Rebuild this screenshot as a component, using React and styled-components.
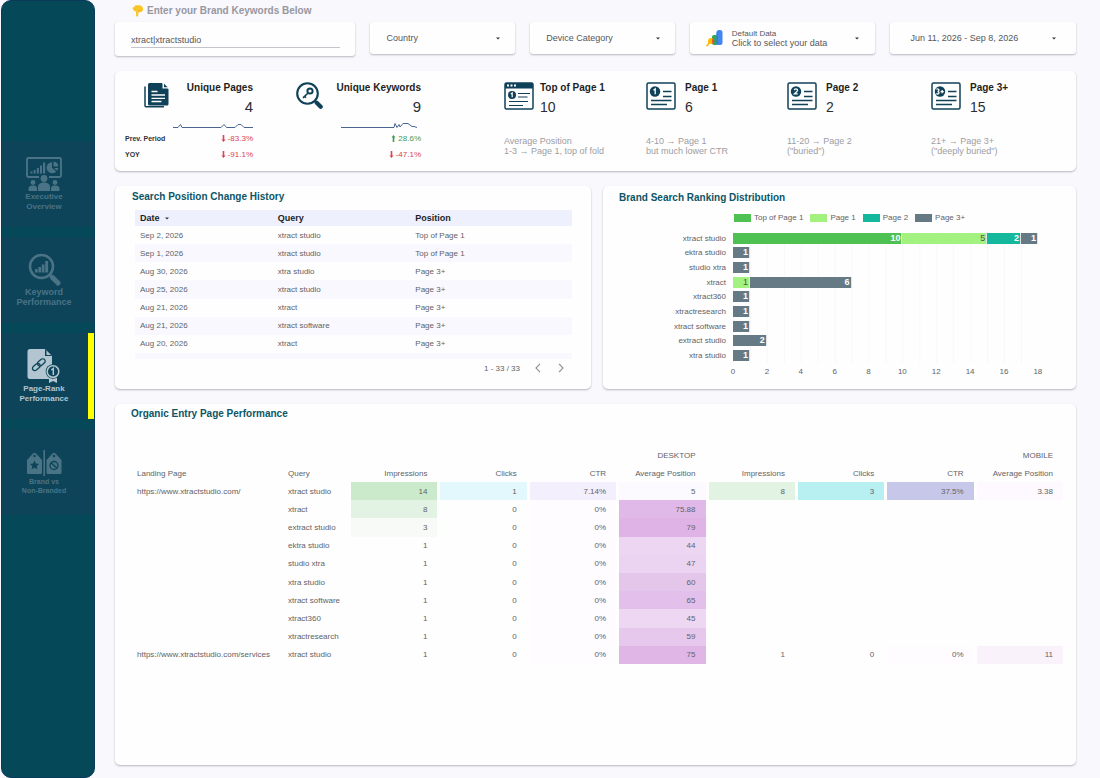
import React from "react";
import styled, { createGlobalStyle } from "styled-components";

const GlobalStyle = createGlobalStyle`
  *, *::before, *::after { box-sizing: border-box; }
  body {
    margin: 0;
    background: #f8f8fd;
    color: #5f6368;
    font-family: "Liberation Sans", Arial, sans-serif;
    font-size: 8px;
  }
  button, input, select { font: inherit; color: inherit; }
`;

const navy = "#0f4158";
const teal = "#0d5566";

/* ---------- Page frame ---------- */

const Page = styled.div`
  display: grid;
  grid-template-columns: 96px minmax(0, 1fr);
  min-height: 100vh;
`;

const Sidebar = styled.nav`
  display: flex;
  flex-direction: column;
  gap: 10px;
  margin: 0 1px;
  padding-top: 140px;
  border: 1px solid #0a3a5c;
  border-radius: 10px;
  background: #054858;
`;

const NavLink = styled.a`
  display: flex;
  flex-direction: column;
  align-items: center;
  justify-content: center;
  gap: 1px;
  height: 86px;
  padding-right: ${(p) => (p.$active ? 2 : 8)}px;
  border-right: ${(p) => (p.$active ? "6px solid #ffff00" : "0")};
  background: #0d4459;
  color: ${(p) => (p.$active ? "#b3c5d1" : "#4a7385")};
  font-size: ${(p) => p.$size}px;
  line-height: ${(p) => (p.$size > 8 ? 10 : p.$size + 2)}px;
  font-weight: bold;
  text-align: center;
  text-decoration: none;
  white-space: pre-line;
`;

const Main = styled.main`
  display: flex;
  flex-direction: column;
  gap: 15px;
  padding: 5px 24px 13px 19px;
`;

const Card = styled.section`
  border-radius: 5px;
  background: #fefefe;
  box-shadow: 0 1px 2px rgba(60, 60, 80, 0.35);
`;

const CardTitle = styled.h2`
  margin: 0;
  color: ${teal};
  font-size: 10px;
  line-height: 12px;
`;

/* ---------- Filters ---------- */

const FilterArea = styled.div`
  display: flex;
  flex-direction: column;
  gap: 5px;
`;

const FilterHint = styled.label`
  display: flex;
  align-items: center;
  gap: 3px;
  padding-left: 17px;
  color: #97979f;
  font-size: 10px;
  line-height: 12px;
  font-weight: bold;
`;

const FilterRow = styled.div`
  display: grid;
  grid-template-columns: 241fr 145fr 145fr 186fr 186fr;
  align-items: start;
  gap: 15px;
`;

const FilterCard = styled(Card)`
  display: grid;
  height: ${(p) => (p.$tall ? 34 : 32)}px;
  padding: ${(p) => (p.$tall ? "10px 15px 8px 16px" : "0")};
  border-radius: 3px;
  color: #55565c;
  font-size: 9px;
`;

const KeywordInput = styled.input`
  min-width: 0;
  padding: 0;
  border: 0;
  border-bottom: 1px solid #c4c4ca;
  outline: 0;
  background: transparent;
`;

const FilterSelect = styled.select`
  grid-area: 1 / 1;
  min-width: 0;
  padding: 0 16px;
  border: 0;
  appearance: none;
  background: transparent;
`;

const SelectArrow = styled.span`
  grid-area: 1 / 1;
  align-self: center;
  justify-self: end;
  display: flex;
  margin-right: 15px;
  pointer-events: none;
`;

const FilterButton = styled.button`
  display: flex;
  align-items: center;
  gap: 9px;
  min-width: 0;
  padding: 0 ${(p) => p.$side}px;
  border: 0;
  background: transparent;
  text-align: left;
  line-height: 10px;
`;

const FilterText = styled.span`
  flex: 1;
  small {
    display: block;
    font-size: 8px;
    line-height: 9px;
  }
`;

/* ---------- Key figures ---------- */

const KpiCard = styled(Card)`
  display: grid;
  grid-template-columns: 179fr 209fr 142fr 141fr 144fr 145fr;
  min-height: 100px;
  padding: 11px 0 0 1px;
`;

const Trend = styled.div`
  display: flex;
  flex-direction: column;
  align-items: flex-end;
  width: ${(p) => (p.$labelled ? 137 : 126)}px;
`;

const TrendHead = styled.div`
  display: flex;
  justify-content: space-between;
  width: ${(p) => p.$width}px;
  text-align: right;
`;

const KpiName = styled.h3`
  margin: 0;
  color: #1e1f24;
  font-size: 10px;
  line-height: 12px;
`;

const KpiValue = styled.div`
  color: #2c2d33;
  font-size: ${(p) => (p.$large ? 15 : 14)}px;
  line-height: 16px;
  padding-top: 5px;
`;

const TrendRow = styled.div`
  display: flex;
  justify-content: space-between;
  align-items: center;
  width: 128px;
  height: 16px;
`;

const TrendLabel = styled.span`
  color: #303137;
  font-size: 7px;
  font-weight: bold;
`;

const Delta = styled.span`
  display: flex;
  align-items: center;
  gap: 2px;
  margin-left: auto;
  color: ${(p) => (p.$up ? "#3f9a52" : "#dc4253")};
`;

const SparkBox = styled.div`
  display: flex;
  padding: 4px 0 1px;
`;

const Rank = styled.div`
  display: flex;
  flex-direction: column;
  gap: 21px;
`;

const RankHead = styled.div`
  display: flex;
  gap: ${(p) => p.$gap}px;
`;

const RankNote = styled.p`
  margin: 0;
  color: #9d9da4;
  font-size: 9px;
  line-height: 10px;
  white-space: pre-line;
`;

/* ---------- Middle panels ---------- */

const PanelRow = styled.div`
  display: grid;
  grid-template-columns: minmax(0, 476fr) minmax(0, 473fr);
  gap: 12px;
`;

const Panel = styled(Card)`
  min-height: 203px;
  padding: 5px 19px 0 17px;
`;

const HistoryTable = styled.table`
  width: calc(100% - 3px);
  height: 149px;
  margin: 7px 0 0 3px;
  border-spacing: 0;
  table-layout: fixed;

  th {
    height: 16px;
    padding: 0 5px;
    background: #eef0fe;
    color: #1e1f24;
    font-size: 9px;
    text-align: left;
  }
  th:last-child { width: 37%; }
  td { height: 18px; padding: 0 5px; }
  tbody tr:nth-child(even) td { background: #f8f8fe; }
  tbody tr:last-child td { height: 6px; }
`;

const SortButton = styled.button`
  display: flex;
  align-items: center;
  gap: 5px;
  padding: 0;
  border: 0;
  background: transparent;
`;

const Pager = styled.div`
  display: flex;
  align-items: center;
  justify-content: flex-end;
  gap: 13px;
  height: 18px;
  padding-right: 6px;
`;

const PagerButton = styled.button`
  display: flex;
  width: 10px;
  padding: 0;
  border: 0;
  background: transparent;
`;

const ChartPanel = styled(Panel)`
  padding: 6px 38px 0 16px;
`;

const Legend = styled.ul`
  display: flex;
  gap: 7px;
  margin: 9px 0 0;
  padding: 0 0 0 115px;
  list-style: none;
  line-height: 10px;
`;

const LegendItem = styled.li`
  display: flex;
  align-items: center;
  gap: 3px;
  white-space: nowrap;
  &::before {
    content: "";
    width: 17px;
    height: 8px;
    background: ${(p) => p.$color};
  }
`;

const Plot = styled.div`
  display: grid;
  grid-template-columns: 107px minmax(0, 1fr);
  column-gap: 7px;
  margin-top: 8px;
`;

const Categories = styled.div`
  display: grid;
  grid-auto-rows: 1fr;
  align-items: center;
  height: 132px;
  text-align: right;
`;

const Bars = styled.div`
  display: grid;
  grid-auto-rows: 1fr;
  align-items: center;
  height: 132px;
  background: linear-gradient(to right, #f8f8fa 1px, transparent 1px) 0 0 / calc(100% / 18) 100%;
`;

const Bar = styled.div`
  display: flex;
  height: 11px;
`;

const Segment = styled.span`
  padding-right: 1px;
  border-right: 1px solid #dfe5e6;
  background: ${(p) => p.$color};
  color: ${(p) => (p.$dark ? "#4c5a45" : "#ffffff")};
  font-size: 9px;
  font-weight: ${(p) => (p.$dark ? "normal" : "bold")};
  line-height: 11px;
  text-align: right;
`;

const Axis = styled.div`
  grid-column: 2;
  display: flex;
  justify-content: space-between;
  padding-top: 4px;
  line-height: 10px;
`;

const Tick = styled.span`
  display: flex;
  justify-content: center;
  width: 0;
`;

/* ---------- Landing page table ---------- */

const EntryCard = styled(Card)`
  flex: 1;
  padding: 4px 10px 20px 16px;
`;

const EntryTable = styled.table`
  width: 100%;
  height: 218px;
  margin-top: 26px;
  border-spacing: 3px 0;
  table-layout: fixed;

  th, td {
    height: 18px;
    padding: 0 10px 0 0;
    font-weight: normal;
    text-align: right;
    white-space: nowrap;
  }
  th:nth-child(-n + 2), td:nth-child(-n + 2) {
    padding: 0 0 0 3px;
    text-align: left;
  }
  thead th[colspan] {
    padding: 0 10px 0 0;
    text-align: right;
  }
`;

const LandingCol = styled.col` width: 148px; `;
const QueryCol = styled.col` width: 63px; `;

const Cell = styled.td`
  background: ${(p) => p.$tint || "transparent"};
`;

/* ---------- Icons ---------- */

const Arrow = () => (
  <svg width="4" height="3" viewBox="0 0 4 3" aria-hidden="true">
    <path d="M0 .4h4L2 2.6z" fill="#33343a" />
  </svg>
);

const HandIcon = () => (
  <svg width="12" height="12" viewBox="0 0 12 12" aria-hidden="true">
    <path
      d="M3 .6C4.500 .1 7 .1 8.600.6c1.400.5 2.400 1.900 2.500 3.400.1 1.500-.8 2.600-2 2.600-.5.700-1.300.9-2 .6l-.7.1-.1 3.300c0 .8-.5 1.200-1.100 1.200s-1.100-.4-1.100-1.200L4 6.600C2.500 6.200 1 4.800.600 3.700.3 2.700 1.200 2.100 2 2.500z"
      fill="#fbc628"
    />
    <path d="M6.600 7.200V4.800M9 6.600V4.600M2 2.600l2 1.700" stroke="#e8a722" strokeWidth=".6" fill="none" />
  </svg>
);

const DataIcon = () => (
  <svg width="17" height="17" viewBox="0 0 17 17" aria-hidden="true">
    <rect x="10.500" y="0" width="6" height="15" rx="2.500" fill="#4285f4" />
    <rect x="6" y="5" width="5.500" height="10" rx="2" fill="#2fa556" />
    <path d="M10.500 3v12h1.500V1.500z" fill="#3a78e0" />
    <circle cx="5" cy="11" r="3" fill="#fbbc04" />
    <path d="M6.200 8.600a3 3 0 0 1 1.500 4.200L6.200 14z" fill="#e8453c" />
    <path d="M3.600 12.500L1 15.700" stroke="#fbbc04" strokeWidth="1.600" strokeLinecap="round" />
  </svg>
);

const OverviewIcon = () => (
  <svg width="36" height="34" viewBox="0 0 36 34" fill="currentColor" aria-hidden="true">
    <path
      d="M13 20H2.500A1.500 1.500 0 0 1 1 18.500V2.500A1.500 1.500 0 0 1 2.500 1h31A1.500 1.500 0 0 1 35 2.500V18.500a1.500 1.500 0 0 1-1.500 1.500H23"
      fill="none"
      stroke="currentColor"
      strokeWidth="1.900"
    />
    <path d="M4.500 14.500h2V16.500h-2zM7.700 13h2v3.500h-2zM10.900 11h2v5.500h-2zM14 8.500h2v8h-2zM17 5.500h2.200v11H17z" />
    <path d="M26 5.200V10.800l4.200 3.600A5.500 5.500 0 1 1 26 5.200z" />
    <path d="M27.500 4.500a5.200 5.200 0 0 1 4.800 5h-4.800zM28 11h4.300a5 5 0 0 1-1.300 2.700z" />
    <circle cx="18" cy="21.500" r="3.400" />
    <path d="M12 34v-4c0-3 2.500-4.500 6-4.500s6 1.500 6 4.500v4z" />
    <circle cx="7" cy="25.500" r="2.400" />
    <circle cx="29" cy="25.500" r="2.400" />
    <path d="M2.500 34v-2.500c0-2 1.500-3 4.500-3s4 1 4 3V34zM25 34v-2.500c0-2 1-3 4-3s4.500 1 4.500 3V34z" />
  </svg>
);

const KeywordIcon = () => (
  <svg width="33" height="33" viewBox="0 0 33 33" fill="currentColor" aria-hidden="true">
    <circle cx="13.500" cy="13.500" r="11.500" fill="none" stroke="currentColor" strokeWidth="2.600" />
    <path d="M7 16h2.700v3.500H7zM10.400 14h2.700v5.500h-2.700zM13.800 11.500h2.700v8h-2.700zM17.200 8h2.900v11.500h-2.900z" />
    <path d="M21 21l3 3" stroke="currentColor" strokeWidth="2.500" />
    <path d="M24.500 24.500l5.500 5.500" stroke="currentColor" strokeWidth="5" strokeLinecap="round" />
  </svg>
);

const PageRankIcon = () => (
  <svg width="34" height="34" viewBox="0 0 34 34" aria-hidden="true">
    <path d="M3 0h15l7 7v23H3a2.500 2.500 0 0 1-2.500-2.500v-25A2.500 2.500 0 0 1 3 0z" fill="currentColor" />
    <path d="M18 0v7h7z" fill="#0d4459" />
    <path d="M19.500 1.500L24 6h-4.500z" fill="currentColor" />
    <g fill="none" stroke="#0d4459" strokeWidth="1.300">
      <rect x="-4.300" y="-2.400" width="8.600" height="4.800" rx="2.400" transform="translate(14.300 13.400) rotate(-40)" />
      <rect x="-4.300" y="-2.400" width="8.600" height="4.800" rx="2.400" transform="translate(9.300 18) rotate(-40)" />
    </g>
    <path d="M22 27h8v7l-4-2-4 2z" fill="currentColor" />
    <circle cx="26" cy="22.500" r="7.300" fill="#0d4459" />
    <circle cx="26" cy="22.500" r="5.800" fill="#0d4459" stroke="currentColor" strokeWidth="1.500" />
    <path d="M24.300 21l2-1.500v6.500" fill="none" stroke="currentColor" strokeWidth="1.500" />
  </svg>
);

const BrandIcon = () => (
  <svg width="36" height="26" viewBox="0 0 36 26" aria-hidden="true">
    <path d="M1 10l6-6.500a2.200 2.200 0 0 1 3 0L16 10v12.500a1.500 1.500 0 0 1-1.500 1.500h-12A1.500 1.500 0 0 1 1 22.500z" fill="currentColor" />
    <path d="M20.500 10l6-6.500a2.200 2.200 0 0 1 3 0L35.500 10v12.500a1.500 1.500 0 0 1-1.500 1.500h-12a1.500 1.500 0 0 1-1.500-1.500z" fill="currentColor" />
    <path d="M18.200 0v26" stroke="currentColor" strokeWidth="1.600" />
    <circle cx="8.500" cy="6" r="1.200" fill="#0d4459" />
    <circle cx="28" cy="6" r="1.200" fill="#0d4459" />
    <path d="M8.500 10.500l1.400 3 3.200.4-2.400 2.200.7 3.200-2.900-1.600-2.900 1.600.7-3.200-2.400-2.200 3.200-.4z" fill="#0d4459" />
    <circle cx="28" cy="15.500" r="4" fill="none" stroke="#0d4459" strokeWidth="1.300" />
    <path d="M25.200 12.700l5.600 5.600" stroke="#0d4459" strokeWidth="1.300" />
  </svg>
);

const PagesIcon = () => (
  <svg width="25" height="26" viewBox="0 0 25 26" aria-hidden="true">
    <path d="M1 4.500v19.300a1 1 0 0 0 1 1h18" fill="none" stroke={navy} strokeWidth="1.500" />
    <path d="M5.500 1h12.500l6.500 6v15a1.500 1.500 0 0 1-1.500 1.500H5.500A1.500 1.500 0 0 1 4 22V2.500A1.500 1.500 0 0 1 5.500 1z" fill={navy} />
    <path d="M18.500 0v6.500H25z" fill="#fefefe" />
    <path d="M20 1.800L23.700 5.300H20z" fill={navy} />
    <path d="M7.500 9.500h6M7.500 13h13.500M7.500 16.300h13.500M7.500 19.500h10" stroke="#fefefe" strokeWidth="1.300" />
  </svg>
);

const KeySearchIcon = () => (
  <svg width="27" height="27" viewBox="0 0 27 27" aria-hidden="true">
    <circle cx="11.500" cy="11.500" r="10.300" fill="none" stroke={navy} strokeWidth="2.100" />
    <path d="M18.500 18.500l2 2" stroke={navy} strokeWidth="2" />
    <path d="M20.700 20.700l4 4" stroke={navy} strokeWidth="4.200" strokeLinecap="round" />
    <circle cx="14" cy="9" r="2.600" fill="none" stroke={navy} strokeWidth="2" />
    <path d="M12.100 11L7 15.800M8.500 14.300l1.500 1.500" fill="none" stroke={navy} strokeWidth="1.600" />
  </svg>
);

const badgeMarks = {
  1: "M-1.500 -1.300L.2 -2.600V2.800",
  2: "M-1.700 -1.300C-1.500 -3 1.600 -3 1.500 -1.100C1.400 .2 -.8 1.300 -1.700 2.400H1.800",
  3: "M-3.600 -2.200C-2 -3.200 -.6 -2 -1.200 -.8C-1.500 -.2 -2 0 -2.500 0C-1.200 0 -.6 1 -1.200 1.900C-1.800 2.700 -3 2.500 -3.700 2M.6 .2H3.800M2.200 -1.400V1.800",
};

const ListIcon = ({ mark }) => (
  <svg width="30" height="28" viewBox="0 0 30 28" fill="none" aria-hidden="true">
    <rect x="1" y="1" width="28" height="26" rx="1.500" stroke={navy} strokeWidth="1.500" />
    <circle cx="9" cy="9.500" r="5.200" fill={navy} />
    <path d={badgeMarks[mark]} transform="translate(9 9.500)" stroke="#fefefe" strokeWidth="1.300" />
    <path d="M17 9.500h8.500M17 14.500h8.500M5 18.500h20.500M5 22.500h16" stroke={navy} strokeWidth="1.300" />
  </svg>
);

const BrowserIcon = () => (
  <svg width="30" height="28" viewBox="0 0 30 28" fill="none" aria-hidden="true">
    <rect x="1" y="1" width="28" height="26" rx="1.500" stroke={navy} strokeWidth="1.500" />
    <path d="M1 1h28v5.500H1z" fill={navy} />
    <path d="M3 3.500h2M6.500 3.500h2M10 3.500h2" stroke="#fefefe" strokeWidth="1.800" />
    <circle cx="8" cy="13" r="4" fill={navy} />
    <path d="M-1.200 -1L.2 -2V2.200" transform="translate(8 13)" stroke="#fefefe" strokeWidth="1.200" />
    <path d="M14 11.500h12M14 15h9.500M5 19.500h19M5 23.500h14" stroke={navy} strokeWidth="1.200" />
  </svg>
);

const Chevron = ({ d }) => (
  <svg width="10" height="10" viewBox="0 0 10 10" aria-hidden="true">
    <path d={d} fill="none" stroke="#8e8f96" strokeWidth="1.100" />
  </svg>
);

const DeltaArrow = ({ up }) => (
  <svg width="5" height="7" viewBox="0 0 5 7" aria-hidden="true">
    <path
      d={up ? "M2.500 0L4.500 2.500H3.300V7H1.700V2.500H.5z" : "M2.500 7L4.500 4.500H3.300V0H1.700V4.500H.5z"}
      fill="currentColor"
    />
  </svg>
);

const Spark = ({ d }) => (
  <svg width="80" height="10" viewBox="0 0 80 10" aria-hidden="true">
    <path d={d} fill="none" stroke="#4b6592" strokeWidth="1" />
  </svg>
);

/* ---------- Data ---------- */

const navItems = [
  { label: "Executive\nOverview", icon: OverviewIcon, size: 8 },
  { label: "Keyword\nPerformance", icon: KeywordIcon, size: 9 },
  { label: "Page-Rank\nPerformance", icon: PageRankIcon, size: 8, active: true },
  { label: "Brand vs\nNon-Branded", icon: BrandIcon, size: 7 },
];

const ranks = [
  { name: "Top of Page 1", value: 10, note: "Average Position\n1-3 → Page 1, top of fold", gap: 6 },
  { name: "Page 1", value: 6, note: "4-10 → Page 1\nbut much lower CTR", gap: 9, mark: 1 },
  { name: "Page 2", value: 2, note: "11-20 → Page 2\n(\"buried\")", gap: 9, mark: 2 },
  { name: "Page 3+", value: 15, note: "21+ → Page 3+\n(\"deeply buried\")", gap: 9, mark: 3 },
];

const history = [
  ["Sep 2, 2026", "xtract studio", "Top of Page 1"],
  ["Sep 1, 2026", "xtract studio", "Top of Page 1"],
  ["Aug 30, 2026", "xtra studio", "Page 3+"],
  ["Aug 25, 2026", "xtract studio", "Page 3+"],
  ["Aug 21, 2026", "xtract", "Page 3+"],
  ["Aug 21, 2026", "xtract software", "Page 3+"],
  ["Aug 20, 2026", "xtract", "Page 3+"],
];

const series = [
  { name: "Top of Page 1", color: "#4fc052" },
  { name: "Page 1", color: "#a3f17f", dark: true },
  { name: "Page 2", color: "#14b89c" },
  { name: "Page 3+", color: "#667a86" },
];

const distribution = [
  ["xtract studio", [10, 5, 2, 1]],
  ["ektra studio", [0, 0, 0, 1]],
  ["studio xtra", [0, 0, 0, 1]],
  ["xtract", [0, 1, 0, 6]],
  ["xtract360", [0, 0, 0, 1]],
  ["xtractresearch", [0, 0, 0, 1]],
  ["xtract software", [0, 0, 0, 1]],
  ["extract studio", [0, 0, 0, 2]],
  ["xtra studio", [0, 0, 0, 1]],
];

const axisMax = 18;
const ticks = [0, 2, 4, 6, 8, 10, 12, 14, 16, 18];

const metrics = ["Impressions", "Clicks", "CTR", "Average Position"];
const none = ["", "", "", ""];

const entries = [
  ["https://www.xtractstudio.com/", "xtract studio", "14", "1", "7.14%", "5", "8", "3", "37.5%", "3.38"],
  ["", "xtract", "8", "0", "0%", "75.88", ...none],
  ["", "extract studio", "3", "0", "0%", "79", ...none],
  ["", "ektra studio", "1", "0", "0%", "44", ...none],
  ["", "studio xtra", "1", "0", "0%", "47", ...none],
  ["", "xtra studio", "1", "0", "0%", "60", ...none],
  ["", "xtract software", "1", "0", "0%", "65", ...none],
  ["", "xtract360", "1", "0", "0%", "45", ...none],
  ["", "xtractresearch", "1", "0", "0%", "59", ...none],
  ["https://www.xtractstudio.com/services", "xtract studio", "1", "0", "0%", "75", "1", "0", "0%", "11"],
];

/* Heat-map tint of each value, by metric. */
const tints = [
  { 14: "#cbeacb", 8: "#e2f3e3", 3: "#f7faf6" },
  { 1: "#e3f8fd", 3: "#b8f0f2" },
  { "7.14%": "#f3effc", "37.5%": "#c7c7e9", "0%": "#fefcff" },
  {
    5: "#fdfaff", "3.38": "#fdf9fe", 11: "#f9f2fb", "75.88": "#e0b9e8", 79: "#dfb3e6", 44: "#ecd6f2",
    47: "#ebd4f1", 60: "#e4c6eb", 65: "#e3c0eb", 45: "#edd7f3", 59: "#e6c8ed", 75: "#e0b6e7",
  },
];

const tintOf = (value, column) => (column < 2 ? undefined : tints[(column - 2) % 4][value]);

/* ---------- Sections ---------- */

const SelectFilter = ({ label }) => (
  <FilterCard as="div">
    <FilterSelect aria-label={label} defaultValue={label}>
      <option>{label}</option>
    </FilterSelect>
    <SelectArrow><Arrow /></SelectArrow>
  </FilterCard>
);

const Filters = () => (
  <FilterArea>
    <FilterHint htmlFor="keywords"><HandIcon />Enter your Brand Keywords Below</FilterHint>
    <FilterRow>
      <FilterCard as="div" $tall>
        <KeywordInput id="keywords" defaultValue="xtract|xtractstudio" />
      </FilterCard>
      <SelectFilter label="Country" />
      <SelectFilter label="Device Category" />
      <FilterCard as="div">
        <FilterButton $side={16}>
          <DataIcon />
          <FilterText><small>Default Data</small>Click to select your data</FilterText>
          <Arrow />
        </FilterButton>
      </FilterCard>
      <FilterCard as="div">
        <FilterButton $side={20}>
          <FilterText>Jun 11, 2026 - Sep 8, 2026</FilterText>
          <Arrow />
        </FilterButton>
      </FilterCard>
    </FilterRow>
  </FilterArea>
);

const TrendKpi = ({ icon: Icon, name, value, labels, deltas, headWidth, spark }) => (
  <Trend $labelled={Boolean(labels)}>
    <TrendHead $width={headWidth}>
      <Icon />
      <div>
        <KpiName>{name}</KpiName>
        <KpiValue $large>{value}</KpiValue>
      </div>
    </TrendHead>
    <SparkBox><Spark d={spark} /></SparkBox>
    {deltas.map(([text, up], i) => (
      <TrendRow key={text}>
        {labels && <TrendLabel>{labels[i]}</TrendLabel>}
        <Delta $up={up}><DeltaArrow up={up} />{text}</Delta>
      </TrendRow>
    ))}
  </Trend>
);

const KeyFigures = () => (
  <KpiCard>
    <TrendKpi
      icon={PagesIcon}
      name="Unique Pages"
      value={4}
      labels={["Prev. Period", "YOY"]}
      deltas={[["-83.3%", false], ["-91.1%", false]]}
      headWidth={109}
      spark="M0 8.500H5L7.500 5.500L9 8.500H48L51 5.500L53.500 8.500H62L65 5.500H68L71 8.500H80"
    />
    <TrendKpi
      icon={KeySearchIcon}
      name="Unique Keywords"
      value={9}
      deltas={[["28.6%", true], ["-47.1%", false]]}
      headWidth={125}
      spark="M0 8.500H53L54 4.500L56 8.500L58 5.500L59 8L62 4.500H67L71 7.500H73L76 8.500"
    />
    {ranks.map((rank) => (
      <Rank key={rank.name}>
        <RankHead $gap={rank.gap}>
          {rank.mark ? <ListIcon mark={rank.mark} /> : <BrowserIcon />}
          <div>
            <KpiName>{rank.name}</KpiName>
            <KpiValue>{rank.value}</KpiValue>
          </div>
        </RankHead>
        <RankNote>{rank.note}</RankNote>
      </Rank>
    ))}
  </KpiCard>
);

const History = () => (
  <Panel>
    <CardTitle>Search Position Change History</CardTitle>
    <HistoryTable>
      <thead>
        <tr>
          <th><SortButton>Date <Arrow /></SortButton></th>
          <th>Query</th>
          <th>Position</th>
        </tr>
      </thead>
      <tbody>
        {history.map((row, i) => (
          <tr key={i}>{row.map((text, j) => <td key={j}>{text}</td>)}</tr>
        ))}
        <tr><td colSpan={3} /></tr>
      </tbody>
    </HistoryTable>
    <Pager>
      <span>1 - 33 / 33</span>
      <PagerButton aria-label="Previous"><Chevron d="M7 .8L3 5l4 4.200" /></PagerButton>
      <PagerButton aria-label="Next"><Chevron d="M3 .8L7 5L3 9.200" /></PagerButton>
    </Pager>
  </Panel>
);

const Distribution = () => (
  <ChartPanel>
    <CardTitle>Brand Search Ranking Distribution</CardTitle>
    <Legend>
      {series.map((s) => <LegendItem key={s.name} $color={s.color}>{s.name}</LegendItem>)}
    </Legend>
    <Plot>
      <Categories>
        {distribution.map(([name]) => <span key={name}>{name}</span>)}
      </Categories>
      <Bars>
        {distribution.map(([name, values]) => (
          <Bar key={name}>
            {values.map((v, i) => v > 0 && (
              <Segment
                key={i}
                $color={series[i].color}
                $dark={series[i].dark}
                style={{ width: `${(v / axisMax) * 100}%` }}
              >
                {v}
              </Segment>
            ))}
          </Bar>
        ))}
      </Bars>
      <Axis>{ticks.map((t) => <Tick key={t}>{t}</Tick>)}</Axis>
    </Plot>
  </ChartPanel>
);

const EntryPages = () => (
  <EntryCard>
    <CardTitle>Organic Entry Page Performance</CardTitle>
    <EntryTable>
      <colgroup>
        <LandingCol />
        <QueryCol />
        <col span={8} />
      </colgroup>
      <thead>
        <tr>
          <td /><td />
          <th colSpan={4}>DESKTOP</th>
          <th colSpan={4}>MOBILE</th>
        </tr>
        <tr>
          <th>Landing Page</th>
          <th>Query</th>
          {[...metrics, ...metrics].map((m, i) => <th key={i}>{m}</th>)}
        </tr>
      </thead>
      <tbody>
        {entries.map((row, i) => (
          <tr key={i}>
            {row.map((value, j) => <Cell key={j} $tint={tintOf(value, j)}>{value}</Cell>)}
          </tr>
        ))}
      </tbody>
    </EntryTable>
  </EntryCard>
);

export default function App() {
  return (
    <>
      <GlobalStyle />
      <Page>
        <Sidebar>
          {navItems.map(({ label, icon: Icon, size, active }) => (
            <NavLink key={label} href="#" $size={size} $active={active}>
              <Icon />
              {label}
            </NavLink>
          ))}
        </Sidebar>
        <Main>
          <Filters />
          <KeyFigures />
          <PanelRow>
            <History />
            <Distribution />
          </PanelRow>
          <EntryPages />
        </Main>
      </Page>
    </>
  );
}
